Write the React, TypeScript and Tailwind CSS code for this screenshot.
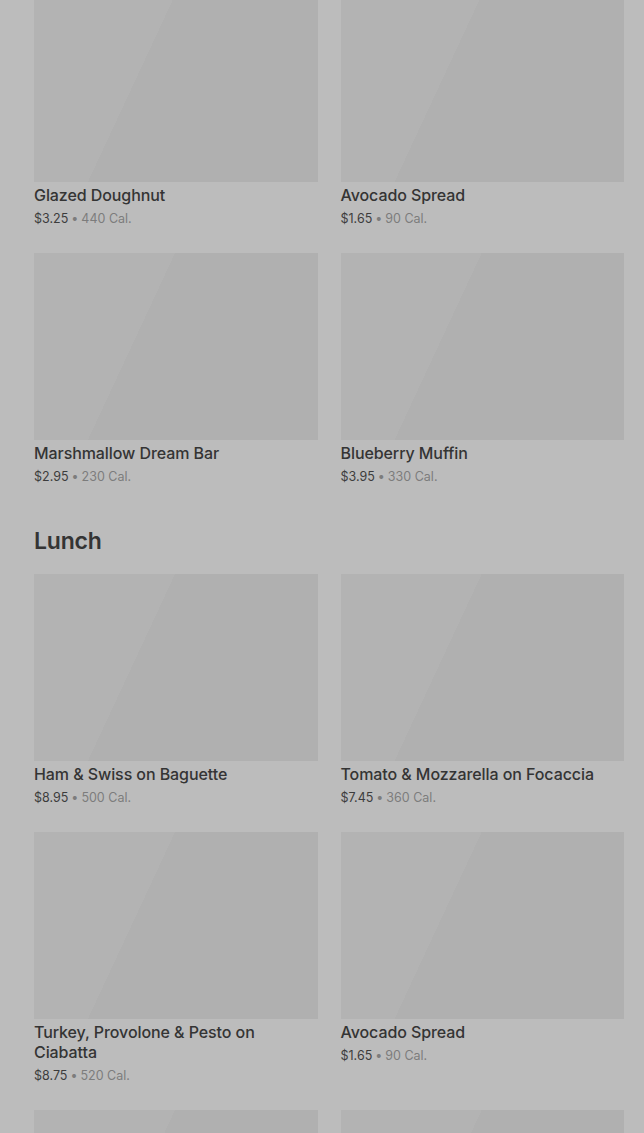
type Item = { name: string; price: string; cal: number };

const breakfast: Item[] = [
  { name: "Glazed Doughnut", price: "$3.25", cal: 440 },
  { name: "Avocado Spread", price: "$1.65", cal: 90 },
  { name: "Marshmallow Dream Bar", price: "$2.95", cal: 230 },
  { name: "Blueberry Muffin", price: "$3.95", cal: 330 },
];

const lunch: Item[] = [
  { name: "Ham & Swiss on Baguette", price: "$8.95", cal: 500 },
  { name: "Tomato & Mozzarella on Focaccia", price: "$7.45", cal: 360 },
  { name: "Turkey, Provolone & Pesto on Ciabatta", price: "$8.75", cal: 520 },
  { name: "Avocado Spread", price: "$1.65", cal: 90 },
  { name: "Chicken Caesar Wrap", price: "$8.25", cal: 610 },
  { name: "Garden Salad", price: "$6.95", cal: 210 },
];

function Card({ item }: { item: Item }) {
  return (
    <div className="flex flex-col">
      <div className="h-[187px] w-full bg-[#b1b1b1] bg-[linear-gradient(115deg,#b3b3b3_0%,#b3b3b3_38%,#b0b0b0_38%,#b0b0b0_100%)]" />
      <p className="mt-[3px] text-[16px] leading-[20px] font-medium tracking-[-0.005em] text-[#343434]">
        {item.name}
      </p>
      <p className="mt-[5px] text-[12.5px] leading-[18px] text-[#7c7c7c]">
        <span className="text-[#3c3c3c]">{item.price}</span>
        <span className="mx-[3px]">•</span>
        {item.cal} Cal.
      </p>
    </div>
  );
}

export default function App() {
  return (
    <div
      className="min-h-[1133px] w-full overflow-hidden bg-[#bcbcbc] pl-[34px] pr-[20px]"
      style={{ fontFamily: "Inter, 'Noto Sans', sans-serif" }}
    >
      <div className="-mt-[5px] grid grid-cols-2 gap-x-[23px] gap-y-[25px]">
        {breakfast.map((it, i) => (
          <Card key={i} item={it} />
        ))}
      </div>

      <h2 className="mt-[39px] mb-[17px] text-[23px] leading-[32px] font-semibold tracking-[-0.01em] text-[#343434]">
        Lunch
      </h2>

      <div className="grid grid-cols-2 gap-x-[23px] gap-y-[25px]">
        {lunch.map((it, i) => (
          <Card key={i} item={it} />
        ))}
      </div>
    </div>
  );
}
